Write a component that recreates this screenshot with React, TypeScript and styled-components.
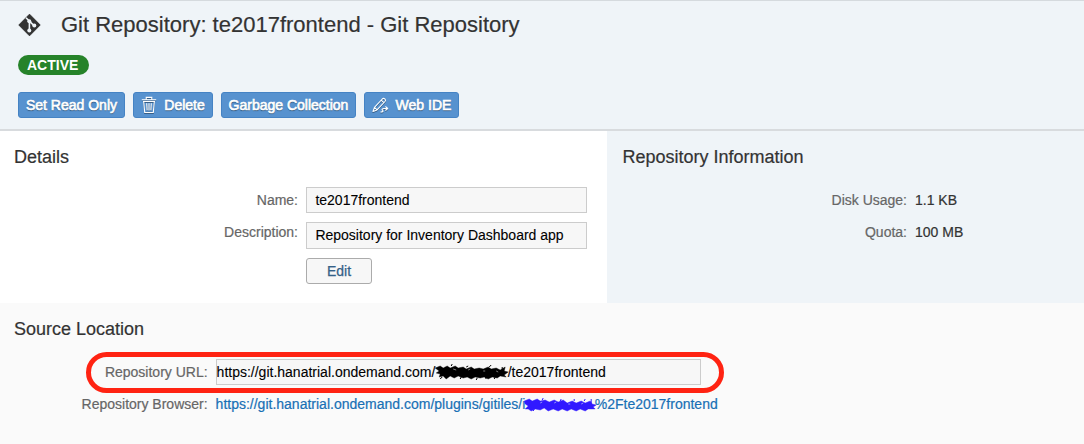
import React from 'react';
import styled, { createGlobalStyle } from 'styled-components';

const GlobalStyle = createGlobalStyle`
  * { box-sizing: border-box; }
  body {
    margin: 0;
    background: #fafafa;
    color: #333;
    font-family: "Liberation Sans", Arial, sans-serif;
    font-size: 14px;
    line-height: 16px;
    -webkit-text-stroke-width: 0.2px;
  }
`;

const Page = styled.div`
  width: 1084px;
  height: 444px;
  overflow: hidden;
  background: #fafafa;
`;

const Header = styled.header`
  height: 131px;
  padding: 11px 18px 0;
  background: #eff4f8;
  border-top: 1px solid #d5dade;
  border-bottom: 2px solid #d8dbde;
`;

const TitleRow = styled.div`
  display: flex;
  align-items: center;
  height: 26px;
  gap: 20px;
`;

const Title = styled.h1`
  margin: 0;
  font-size: 22px;
  font-weight: 400;
  line-height: 26px;
  white-space: nowrap;
`;

const Badge = styled.div`
  display: flex;
  align-items: center;
  width: 71px;
  height: 20px;
  margin-top: 17px;
  padding-left: 9px;
  border-radius: 10px;
  background: #26832a;
  color: #fff;
  font-weight: 700;
  -webkit-text-stroke-width: 0;
`;

const Toolbar = styled.div`
  display: flex;
  gap: 8px;
  margin-top: 17px;
`;

const ActionButton = styled.button<{ $width: number }>`
  display: flex;
  align-items: center;
  justify-content: center;
  gap: 7px;
  width: ${(p) => p.$width}px;
  height: 26px;
  padding: 0;
  border: 1px solid #4583c4;
  border-radius: 3px;
  background: #5792cf;
  color: #fff;
  font: 14px/16px "Liberation Sans", Arial, sans-serif;
  -webkit-text-stroke: 0.65px #fff;
  text-shadow: 0 1px 1px rgba(0, 0, 0, 0.5);
  white-space: nowrap;
  svg { filter: drop-shadow(0 1px 0 rgba(0, 0, 0, 0.35)); }
`;

const Columns = styled.div`
  display: grid;
  grid-template-columns: 607px 1fr;
  height: 172px;
`;

const Panel = styled.section<{ $bg: string; $inset: number }>`
  padding: 15px 0 0 ${(p) => p.$inset}px;
  background: ${(p) => p.$bg};
`;

const PanelTitle = styled.h2`
  margin: 0;
  font-size: 18px;
  font-weight: 400;
  line-height: 22px;
`;

const Fields = styled.div<{ $top: number; $gap: number }>`
  display: flex;
  flex-direction: column;
  gap: ${(p) => p.$gap}px;
  margin-top: ${(p) => p.$top}px;
`;

const Field = styled.div<{ $label: number }>`
  display: grid;
  grid-template-columns: ${(p) => p.$label}px 1fr;
  column-gap: 8px;
  align-items: start;
  white-space: nowrap;
`;

const Label = styled.span<{ $top?: number }>`
  padding-top: ${(p) => p.$top ?? 0}px;
  color: #666;
  text-align: right;
`;

const ValueBox = styled.div<{ $width: number; $height?: number; $pad?: number }>`
  display: flex;
  align-items: flex-start;
  width: ${(p) => p.$width}px;
  height: ${(p) => p.$height ?? 26}px;
  padding: 4px 0 0 ${(p) => p.$pad ?? 8.4}px;
  border: 1px solid #ccc;
  background: #f7f7f7;
  color: #000;
  -webkit-text-stroke-width: 0.1px;
`;

const EditButton = styled.button`
  width: 66px;
  height: 26px;
  padding: 0;
  border: 1px solid #ababab;
  border-radius: 3px;
  background: #f7f7f7;
  color: #346187;
  font: 14px/16px "Liberation Sans", Arial, sans-serif;
  -webkit-text-stroke-width: 0.25px;
`;

const Source = styled.section`
  position: relative;
  height: 141px;
  padding: 15px 0 0 14px;
  background: #fafafa;
`;

const Link = styled.a`
  display: flex;
  align-items: center;
  color: #1870b5;
  text-decoration: none;
`;

const Highlight = styled.div`
  position: absolute;
  left: 86px;
  top: 49px;
  width: 638px;
  height: 41px;
  border: 5px solid #ff2312;
  border-radius: 21px;
`;

const Scribble = styled.svg`
  flex: none;
  overflow: visible;
`;

const GitIcon = () => (
  <svg width="23" height="24" viewBox="0 0 23 24">
    <path d="M11.5 1.2 22.2 12 11.5 22.8.8 12Z" fill="#333" stroke="#333" strokeWidth="1" strokeLinejoin="round" />
    <path d="M8 4.7 11.4 8.1V18M11.4 8.2l4.6 4.4" fill="none" stroke="#eff4f8" strokeWidth="1.6" />
    <g fill="#eff4f8">
      <circle cx="11.3" cy="8.2" r="2" />
      <circle cx="11.3" cy="17.6" r="2" />
      <circle cx="16.3" cy="12.6" r="2" />
    </g>
  </svg>
);

const TrashIcon = () => (
  <svg width="16" height="18" viewBox="0 0 16 18" fill="none" stroke="#fff" strokeWidth="1.1">
    <path d="M.8 3.7h14.4M5.2 3.2V1.4h5.6v1.8M2 5.5h12M2.7 5.7l1 10.8h8.6l1-10.8" />
    <path d="M5.7 7.2l.4 7.2M8 7.2v7.2M10.3 7.2l-.4 7.2" />
  </svg>
);

const PencilIcon = () => (
  <svg width="17" height="16" viewBox="0 0 17 16" fill="none" stroke="#fff" strokeWidth="1.1" strokeLinejoin="round">
    <path d="M1 14.5 2.5 10.4 10.3 2Q11.5.8 12.7 1.9L13 2.2Q14.1 3.3 13 4.5L5 12.9ZM2.5 10.4l2.5 2.5M9.2 3.2l2.6 2.5" />
    <path d="M8.5 15c2.3 0 3.2-.9 2.1-1.6s-.4-1.9 1.4-1.9h3.5M13.4 9.5l2.3 2-2.3 2" />
  </svg>
);

export default function App() {
  return (
    <>
      <GlobalStyle />
      <Page>
        <Header>
          <TitleRow>
            <GitIcon />
            <Title>Git Repository: te2017frontend - Git Repository</Title>
          </TitleRow>
          <Badge>ACTIVE</Badge>
          <Toolbar>
            <ActionButton $width={107}>Set Read Only</ActionButton>
            <ActionButton $width={80}><TrashIcon />Delete</ActionButton>
            <ActionButton $width={135}>Garbage Collection</ActionButton>
            <ActionButton $width={95}><PencilIcon />Web IDE</ActionButton>
          </Toolbar>
        </Header>
        <Columns>
          <Panel $bg="#fff" $inset={14}>
            <PanelTitle>Details</PanelTitle>
            <Fields $top={19} $gap={9}>
              <Field $label={284}>
                <Label $top={5}>Name:</Label>
                <ValueBox $width={281}>te2017frontend</ValueBox>
              </Field>
              <Field $label={284}>
                <Label $top={2}>Description:</Label>
                <ValueBox $width={281} $height={27}>Repository for Inventory Dashboard app</ValueBox>
              </Field>
              <Field $label={284}>
                <span />
                <EditButton>Edit</EditButton>
              </Field>
            </Fields>
          </Panel>
          <Panel $bg="#eff4f8" $inset={15.5}>
            <PanelTitle>Repository Information</PanelTitle>
            <Fields $top={24} $gap={16}>
              <Field $label={284.5}><Label>Disk Usage:</Label><span>1.1 KB</span></Field>
              <Field $label={284.5}><Label>Quota:</Label><span>100 MB</span></Field>
            </Fields>
          </Panel>
        </Columns>
        <Source>
          <PanelTitle>Source Location</PanelTitle>
          <Fields $top={19} $gap={11}>
            <Field $label={193.6}>
              <Label $top={5}>Repository URL:</Label>
              <ValueBox $width={485} $pad={0}>
                https://git.hanatrial.ondemand.com/
                <Scribble width="72.4" height="16" viewBox="0 0 72 16" fill="#000" stroke="#000">
                  <path d="M0 4 5 2 8 4 12 2 15 4 20 2 23 4 28 3 31 5 36 3 39 5 44 4 48 5 53 3 56 5 61 4 65 6 70 3 69 7 73 8 69 11 71 13 65 12 62 14 57 13 53 15 49 13 45 14 40 13 36 15 32 13 28 14 23 12 19 14 15 12 11 15 8 12 4 13 5 10 1 9 4 7Z" strokeWidth=".4" />
                  <path d="m7 13-2 2M16 2l1-2M31 3l2-1M42 14l-1 2M54 3l2-2M60 13l-1 2M67 3v9M50 13l1 2M26 13l-1 2" strokeWidth="1" />
                  <path d="m18 5 3 1M33 6l2-1M48 7h2M61 7l2 1" stroke="#999" strokeWidth=".8" />
                </Scribble>
                /te2017frontend
              </ValueBox>
            </Field>
            <Field $label={193.6}>
              <Label>Repository Browser:</Label>
              <Link href="#">
                https://git.hanatrial.ondemand.com/plugins/gitiles/i
                <Scribble width="69.4" height="16" viewBox="0 0 69 16" fill="#3019ff" stroke="#3019ff">
                  <path d="M-1 5 4 3 7 5 12 3 15 5 20 4 24 6 29 4 33 6 38 4 42 7 47 5 51 7 56 5 60 7 65 5 67 8 71 9 68 11 70 13 63 13 60 15 55 13 51 15 46 13 42 15 37 13 33 15 28 13 23 15 19 12 15 14 10 13 6 15 3 13 0 13 3 10 0 8Z" strokeWidth=".4" />
                  <path d="m9 13-1 2M17 4l1-2M35 5l1-2M49 5V3M59 5l1-2M66 3v6" strokeWidth="1" />
                  <path d="m15 7 2-1M29 7l2-1M43 8h2M56 8l2-1" stroke="#a9b5f7" strokeWidth=".8" />
                </Scribble>
                %2Fte2017frontend
              </Link>
            </Field>
          </Fields>
          <Highlight />
        </Source>
      </Page>
    </>
  );
}
